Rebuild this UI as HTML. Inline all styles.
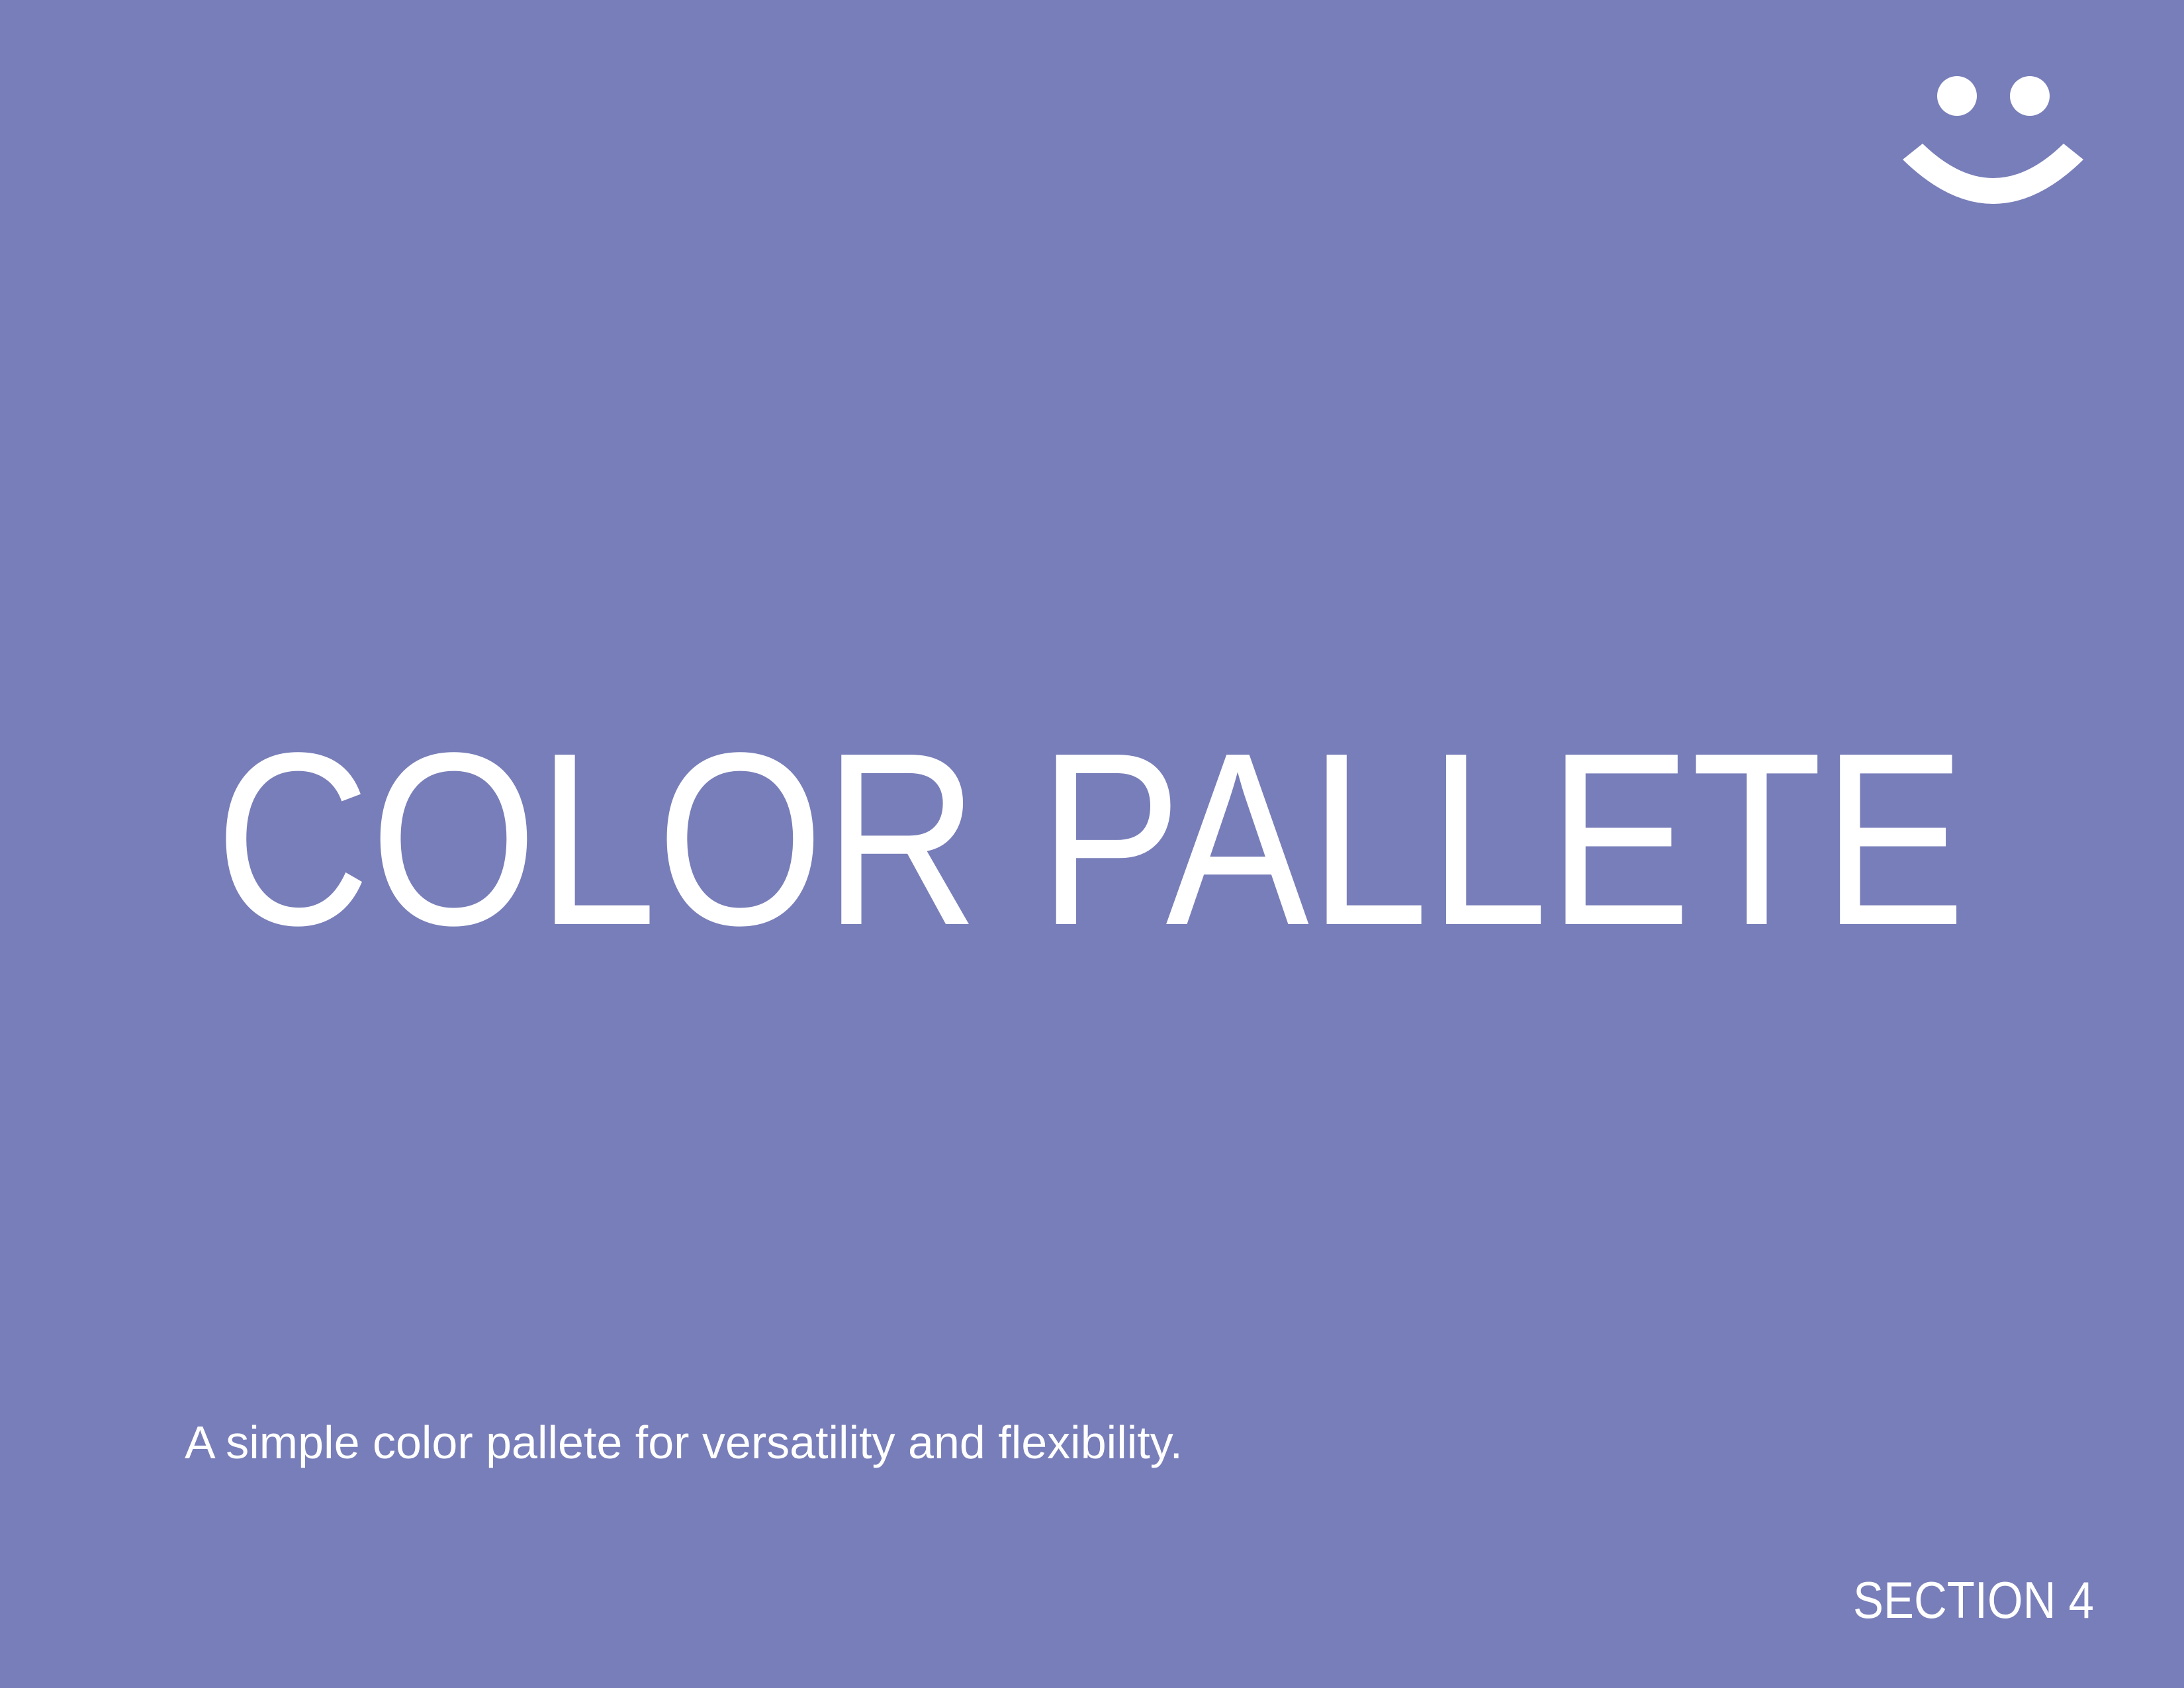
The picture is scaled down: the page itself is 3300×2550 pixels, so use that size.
<!DOCTYPE html>
<html><head><meta charset="utf-8"><style>
html,body{margin:0;padding:0;background:#787eb9;}
svg{display:block}
text{font-family:"Liberation Sans",sans-serif;fill:#fff}
</style></head><body>
<svg width="3300" height="2550" viewBox="0 0 3300 2550" xmlns="http://www.w3.org/2000/svg">
<rect width="3300" height="2550" fill="#787eb9"/>
<circle cx="2957" cy="145" r="30" fill="#fff"/>
<circle cx="3067" cy="145" r="30" fill="#fff"/>
<path d="M2875,241 Q3012,375 3148,241 L3118,217 Q3012,321 2905,217 Z" fill="#fff"/>
<text x="325" y="1396" font-size="372" textLength="2645" lengthAdjust="spacingAndGlyphs">COLOR PALLETE</text>
<text x="279" y="2203" font-size="70" textLength="1508" lengthAdjust="spacingAndGlyphs">A simple color pallete for versatility and flexibility.</text>
<text x="2800" y="2444" font-size="78" textLength="364" lengthAdjust="spacingAndGlyphs">SECTION 4</text>
</svg>
</body></html>
